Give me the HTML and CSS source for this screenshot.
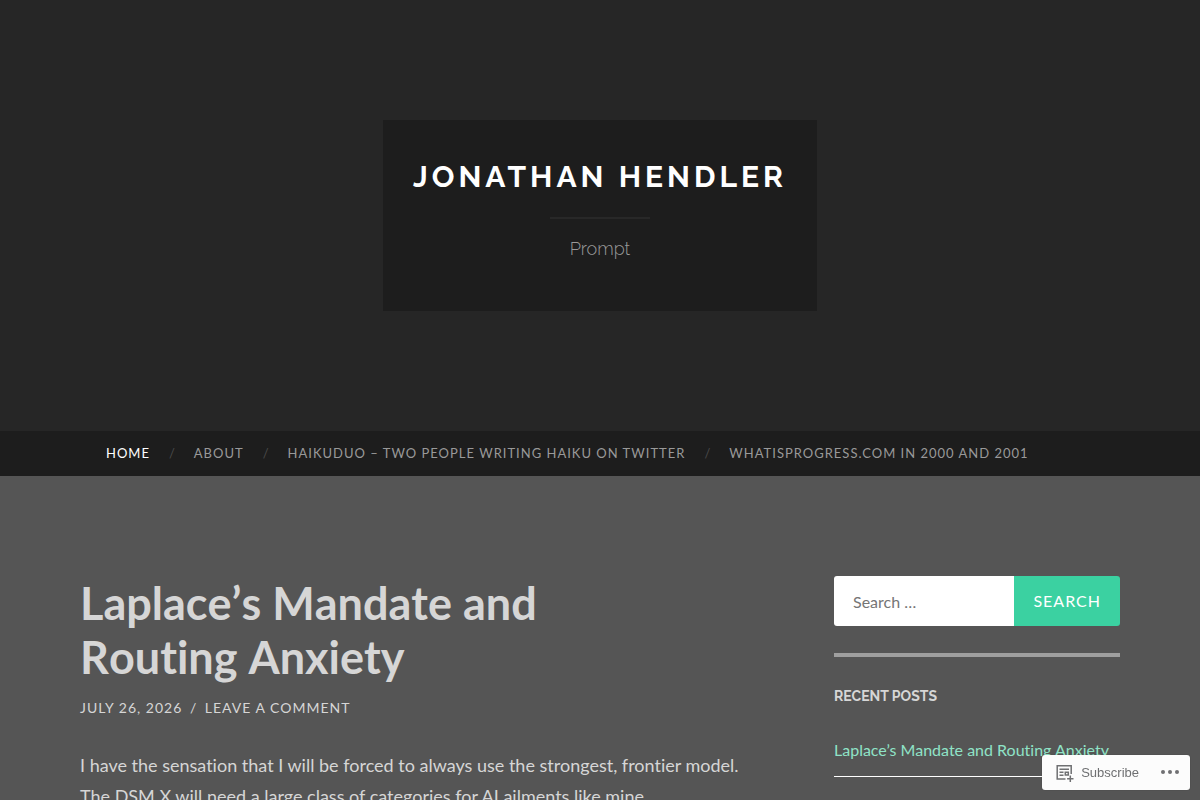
FILE: index.html
```
<!DOCTYPE html>
<html lang="en">
<head>
  <meta charset="UTF-8" />
  <meta name="viewport" content="width=device-width, initial-scale=1.0"/>
  <title>Jonathan Hendler</title>
  <link rel="stylesheet" href="styles.css">
</head>
<body>
  <header class="header">
    <div class="blog-info">
      <h1 class="blog-title"><a href="#">Jonathan Hendler</a></h1>
      <p class="blog-description">Prompt</p>
    </div>
  </header>

  <nav class="navigation">
    <ul class="blog-menu">
      <li class="current"><a href="#">Home</a></li>
      <li><a href="#">About</a></li>
      <li><a href="#">HaikuDuo – Two people writing Haiku on Twitter</a></li>
      <li><a href="#">WhatIsProgress.com in 2000 and 2001</a></li>
    </ul>
  </nav>

  <div class="wrapper">
    <main class="content">
      <article class="post">
        <h2 class="post-title"><a href="#">Laplace’s Mandate and<br> Routing Anxiety</a></h2>
        <p class="post-meta">
          <a href="#">July 26, 2026</a>
          <span class="date-sep">/</span>
          <a href="#">Leave a Comment</a>
        </p>
        <div class="post-content">
          <p>I have the sensation that I will be forced to always use the strongest, frontier model. The DSM X will need a large class of categories for AI ailments like mine.</p>
        </div>
      </article>
    </main>

    <aside class="sidebar">
      <form class="search-form">
        <input type="search" placeholder="Search …" aria-label="Search for:">
        <button type="submit">Search</button>
      </form>
      <section class="widget">
        <h3 class="widget-title">Recent Posts</h3>
        <ul>
          <li><a href="#">Laplace’s Mandate and Routing Anxiety</a></li>
        </ul>
      </section>
    </aside>
  </div>

  <div class="actionbar">
    <button type="button" class="subscribe">
      <svg width="20" height="20" viewBox="0 0 20 20" fill="none" stroke="currentColor" stroke-width="1.5" aria-hidden="true">
        <path d="M11.5 16H3.2V2.8H17.2V11"/>
        <path d="M5.5 6.2H15M5.5 9.2H9.5M5.5 12.2H9.5"/>
        <path d="M11.3 9.3H14.3V12H11.3Z"/>
        <path d="M16.3 12.5V18.9M13.1 15.7H19.5"/>
      </svg>
      Subscribe
    </button>
    <button type="button" class="more" aria-label="More">
      <svg width="20" height="20" viewBox="0 0 20 20" fill="currentColor" aria-hidden="true">
        <circle cx="3" cy="9" r="2"/>
        <circle cx="10" cy="9" r="2"/>
        <circle cx="17" cy="9" r="2"/>
      </svg>
    </button>
  </div>
</body>
</html>
```
FILE: styles.css
```
* {
  box-sizing: border-box;
}

body {
  margin: 0;
  background: #555;
  color: #d6d6d6;
  font-family: 'Lato', sans-serif;
  font-size: 18px;
  font-variant-ligatures: none;
}

a {
  color: inherit;
  text-decoration: none;
}

h1, h2, h3, p, ul {
  margin: 0;
  padding: 0;
}

ul {
  list-style: none;
}

/* header */
.header {
  background: #262626;
  padding: 120px 40px;
  display: flex;
  justify-content: center;
}

.blog-info {
  background: #1d1d1d;
  padding: 38px 30px 50px;
  text-align: center;
}

.blog-title {
  font-family: 'Raleway', 'Lato', sans-serif;
  font-size: 30px;
  line-height: 38px;
  font-weight: bold;
  letter-spacing: 4px;
  text-transform: uppercase;
  color: #fff;
}

.blog-title::after {
  content: "";
  display: block;
  width: 100px;
  height: 2px;
  margin: 21px auto 0;
  background: #282828;
}

.blog-description {
  font-family: 'Raleway', 'Lato', sans-serif;
  font-size: 18px;
  line-height: 24px;
  font-weight: 300;
  color: #999;
  margin-top: 18px;
}

/* navigation */
.navigation {
  background: #1d1d1d;
  padding: 0 80px;
}

.blog-menu {
  display: flex;
  flex-wrap: wrap;
  max-width: 1040px;
  margin: 0 auto;
  padding-left: 26px;
  font-size: 13px;
  line-height: 45px;
  letter-spacing: 1px;
  text-transform: uppercase;
  color: #999;
}

.blog-menu li + li::before {
  content: "/";
  margin: 0 18px 0 19px;
  color: #4a4a4a;
}

.blog-menu .current {
  color: #fff;
}

/* page */
.wrapper {
  display: flex;
  justify-content: space-between;
  align-items: flex-start;
  max-width: 1120px;
  margin: 0 auto;
  padding: 100px 40px;
}

.content {
  width: 65%;
}

.post-title {
  font-size: 45px;
  line-height: 54px;
  font-weight: bold;
  font-kerning: none;
}

.post-meta {
  margin-top: 14px;
  font-size: 14px;
  line-height: 20px;
  letter-spacing: 1px;
  text-transform: uppercase;
}

.date-sep {
  margin: 0 3px;
}

.post-content {
  margin-top: 32px;
  line-height: 31px;
}

/* sidebar */
.sidebar {
  width: 286px;
}

.search-form {
  display: flex;
  height: 50px;
}

.search-form input {
  flex: 1;
  min-width: 0;
  padding: 0 19px;
  border: 0;
  border-radius: 3px 0 0 3px;
  background: #fff;
  font: 16px 'Lato', sans-serif;
}

.search-form input::placeholder {
  color: #757575;
}

.search-form button {
  padding: 0 19px 2px;
  border: 0;
  border-radius: 0 3px 3px 0;
  background: #3bd1a1;
  color: #fff;
  font: 16px 'Lato', sans-serif;
  letter-spacing: 1px;
  text-transform: uppercase;
}

.widget {
  margin-top: 27px;
  padding-top: 29px;
  border-top: 4px solid #9f9f9f;
}

.widget-title {
  font-family: 'Raleway', 'Lato', sans-serif;
  font-size: 14px;
  line-height: 20px;
  font-weight: bold;
  text-transform: uppercase;
}

.widget ul {
  margin-top: 20px;
}

.widget li {
  padding: 11px 0 13px;
  border-bottom: 1px solid #fff;
  font-size: 16px;
  line-height: 26px;
  color: #8fe3c7;
}

/* subscribe bar */
.actionbar {
  position: fixed;
  right: 10px;
  bottom: 10px;
  display: flex;
  align-items: center;
  height: 35px;
  padding: 0 10px 0 12px;
  gap: 21px;
  border-radius: 3px;
  background: #fcfcfc;
  box-shadow: 0 0 1px rgba(0, 0, 0, 0.4);
}

.actionbar button {
  display: flex;
  align-items: center;
  gap: 7px;
  padding: 0;
  border: 0;
  background: none;
  color: #6f7072;
  font: 13px 'Liberation Sans', Arial, sans-serif;
}
```
